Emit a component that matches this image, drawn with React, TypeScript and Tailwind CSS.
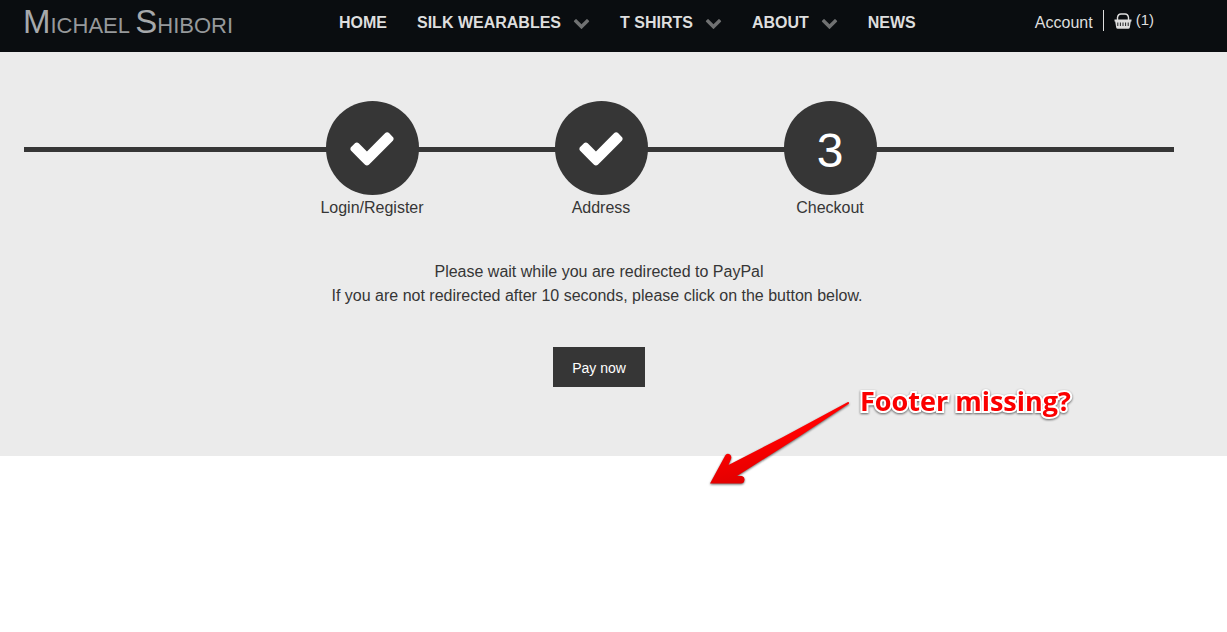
import React from "react";

const CHECK =
  "M1671 566q0 40-28 68l-724 724-136 136q-28 28-68 28t-68-28l-136-136-362-362q-28-28-28-68t28-68l136-136q28-28 68-28t68 28l294 295 656-657q28-28 68-28t68 28l136 136q28 28 28 68z";
const CHEVRON =
  "M1683 808l-742 741q-19 19-45 19t-45-19l-742-741q-19-19-19-45.5t19-45.5l166-165q19-19 45-19t45 19l531 531 531-531q19-19 45-19t45 19l166 165q19 19 19 45.5t-19 45.5z";

function NavItem({ label, menu }: { label: string; menu?: boolean }) {
  return (
    <li>
      <a href="#" className="flex items-center gap-3">
        {label}
        {menu && (
          <svg viewBox="0 0 1792 1792" className="mb-[2px] h-[17px] w-[17px] fill-[#707172]" aria-hidden="true">
            <path d={CHEVRON} />
          </svg>
        )}
      </a>
    </li>
  );
}

function Basket() {
  return (
    <svg viewBox="0 0 18 16" className="h-4 w-[18px]" aria-hidden="true">
      <path d="M3.5 7V4.5Q4 1 7 1H11Q14 1 14.500 4.500V7" fill="none" stroke="#dedede" strokeWidth="1.4" />
      <path d="M0.500 6.500H17.500V8.500H16.800L15.800 14.500Q15.500 15.800 14.300 15.800H3.700Q2.500 15.800 2.200 14.500L1.200 8.500H0.500Z" fill="#dedede" />
      <path d="M3.800 9.500V13M6.400 9.500V13M9 9.500V13M11.600 9.500V13M14.200 9.500V13" stroke="#0a0d10" strokeWidth="0.900" />
    </svg>
  );
}

function Step({ label, done, n }: { label: string; done?: boolean; n: number }) {
  return (
    <li className="flex w-[229px] flex-col items-center">
      <span className="flex h-[94px] w-[93px] items-center justify-center rounded-full bg-[#363636] text-5xl text-white">
        {done ? (
          <svg viewBox="0 0 1792 1792" className="h-[50px] w-[50px] fill-white" role="img" aria-label="Completed">
            <path d={CHECK} />
          </svg>
        ) : (
          <span className="pt-[6px]">{n}</span>
        )}
      </span>
      <span className="leading-[26px]">{label}</span>
    </li>
  );
}

export default function App() {
  return (
    <div className="relative min-h-screen bg-white font-['Liberation_Sans',Arial,sans-serif] text-base text-[#363636]">
      <header className="flex h-[52px] items-start bg-[#0a0d10] pl-[23px] text-[#dedede]">
        <a href="#" className="w-[316px] shrink-0 text-[22px] leading-[44px] whitespace-nowrap text-[#96999b]">
          <span className="text-[33px] leading-[44px] text-[#a6a9ab]">M</span>ICHAEL{" "}
          <span className="text-[33px] leading-[44px] text-[#a6a9ab]">S</span>HIBORI
        </a>
        <nav className="pt-[11px]">
          <ul className="flex gap-[30px] leading-6 font-bold whitespace-nowrap">
            <NavItem label="HOME" />
            <NavItem label="SILK WEARABLES" menu />
            <NavItem label="T SHIRTS" menu />
            <NavItem label="ABOUT" menu />
            <NavItem label="NEWS" />
          </ul>
        </nav>
        <div className="mr-[73px] ml-auto flex items-start pt-[10px]">
          <a href="#" className="pr-[10px] leading-[26px]">Account</a>
          <a href="#" className="flex h-[21px] items-center gap-1 border-l border-[#dedede] pl-[10px] text-[15px]">
            <Basket />
            (1)
          </a>
        </div>
      </header>

      <main className="flex flex-col items-center bg-[#ebebeb] pt-[49px] pr-[53px] pb-[69px] pl-6">
        <div className="grid w-full items-start">
          <div className="col-start-1 row-start-1 mt-[46px] h-[5px] bg-[#363636]" />
          <ol className="isolate col-start-1 row-start-1 flex justify-center pl-1">
            <Step label="Login/Register" done n={1} />
            <Step label="Address" done n={2} />
            <Step label="Checkout" n={3} />
          </ol>
        </div>
        <p className="mt-[39px] text-center leading-6">
          Please wait while you are redirected to PayPal
          <br />
          <span className="pr-1">If you are not redirected after 10 seconds, please click on the button below.</span>
        </p>
        <button type="button" className="mt-[39px] h-10 w-[92px] bg-[#363636] pt-[2px] text-sm text-white">
          Pay now
        </button>
      </main>

      <svg viewBox="0 0 150 90" className="absolute top-[398px] left-[705px] h-[90px] w-[150px]" aria-hidden="true">
        <defs>
          <linearGradient id="arrow" x1="0" y1="0" x2="0.300" y2="1">
            <stop offset="0.500" stopColor="#ff0000" />
            <stop offset="1" stopColor="#e00000" />
          </linearGradient>
        </defs>
        <path
          d="M143 4Q145 4.500 143.500 6L95 38L32 78L37 78Q40 79 39.500 82Q39 85.500 36 85.500H5L20.500 57Q22.500 55 25 56.500Q27 58 26 61L23.500 67L78 39Z"
          fill="url(#arrow)"
          className="drop-shadow-[0_1px_1px_rgba(0,0,0,0.6)]"
        />
      </svg>
      <p className="absolute top-[381px] left-[860px] font-['Open_Sans','Noto_Sans',sans-serif] text-[27px] leading-10 font-bold whitespace-nowrap text-[#fb0000] drop-shadow-[0_1px_1px_rgba(0,0,0,0.6)] [-webkit-text-stroke:4px_white] [paint-order:stroke_fill]">
        Footer missing?
      </p>
    </div>
  );
}
